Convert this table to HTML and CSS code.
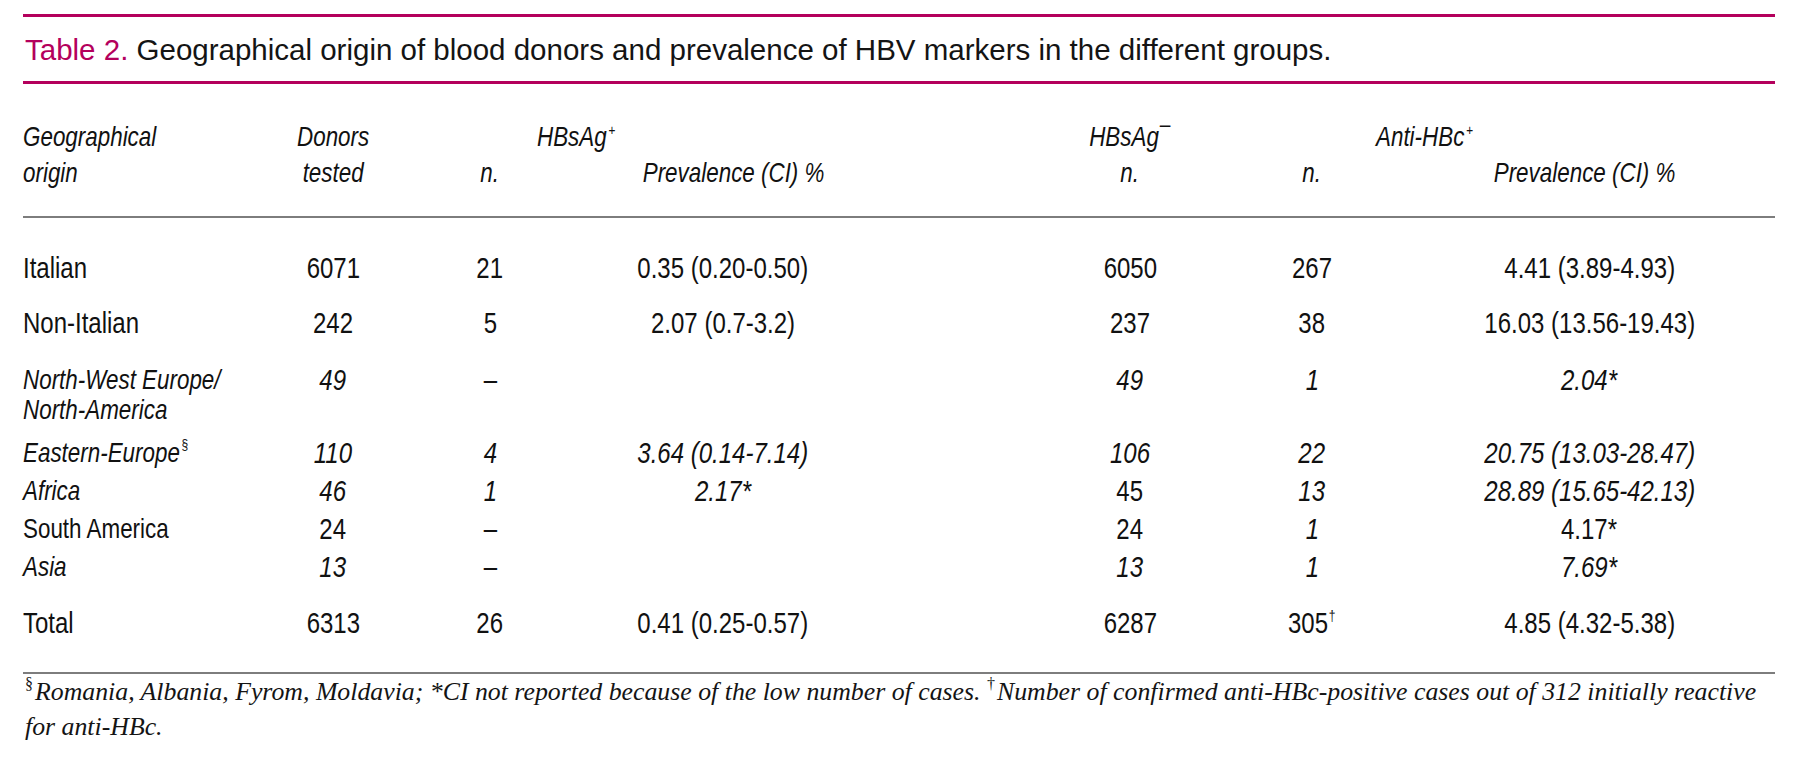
FILE: index.html
```html
<!DOCTYPE html>
<html lang="en">
<head>
<meta charset="utf-8">
<title>Table 2</title>
<link rel="stylesheet" href="styles.css">
</head>
<body>
<div class="page">
  <div class="rule-pink rule-top"></div>
  <h1 class="title"><span class="label">Table 2.</span> Geographical origin of blood donors and prevalence of HBV markers in the different groups.</h1>
  <div class="rule-pink"></div>
  <table class="data">
    <colgroup>
      <col class="w-a"><col class="w-b"><col class="w-c"><col class="w-d"><col class="w-e"><col class="w-f"><col class="w-g"><col class="w-h">
    </colgroup>
    <thead>
      <tr class="hd hd1">
        <td class="l"><span class="k">Geographical</span></td>
        <td class="c"><span class="k">Donors</span></td>
        <td class="l grp1" colspan="2"><span class="k">HBsAg<sup class="sp">+</sup></span></td>
        <td></td>
        <td class="c"><span class="k">HBsAg<sup class="sm">–</sup></span></td>
        <td class="l grp2" colspan="2"><span class="k">Anti-HBc<sup class="sp">+</sup></span></td>
      </tr>
      <tr class="hd hd2">
        <td class="l"><span class="k">origin</span></td>
        <td class="c"><span class="k">tested</span></td>
        <td class="c"><span class="k">n.</span></td>
        <td class="c prev1"><span class="k">Prevalence (CI) %</span></td>
        <td></td>
        <td class="c"><span class="k">n.</span></td>
        <td class="c"><span class="k">n.</span></td>
        <td class="c prev2"><span class="k">Prevalence (CI) %</span></td>
      </tr>
    </thead>
    <tbody>
      <tr class="r1">
        <td class="l"><span class="k">Italian</span></td>
        <td class="c"><span class="k">6071</span></td>
        <td class="c"><span class="k">21</span></td>
        <td class="c"><span class="k">0.35 (0.20-0.50)</span></td>
        <td></td>
        <td class="c"><span class="k">6050</span></td>
        <td class="c"><span class="k">267</span></td>
        <td class="c"><span class="k">4.41 (3.89-4.93)</span></td>
      </tr>
      <tr class="r2">
        <td class="l"><span class="k">Non-Italian</span></td>
        <td class="c"><span class="k">242</span></td>
        <td class="c"><span class="k">5</span></td>
        <td class="c"><span class="k">2.07 (0.7-3.2)</span></td>
        <td></td>
        <td class="c"><span class="k">237</span></td>
        <td class="c"><span class="k">38</span></td>
        <td class="c"><span class="k">16.03 (13.56-19.43)</span></td>
      </tr>
      <tr class="r3">
        <td class="sub it"><span class="k">North-West Europe/<br>North-America</span></td>
        <td class="c it"><span class="k">49</span></td>
        <td class="c"><span class="k">–</span></td>
        <td class="c"></td>
        <td></td>
        <td class="c it"><span class="k">49</span></td>
        <td class="c it"><span class="k">1</span></td>
        <td class="c it"><span class="k">2.04*</span></td>
      </tr>
      <tr class="r4">
        <td class="sub it"><span class="k">Eastern-Europe<sup class="ss">§</sup></span></td>
        <td class="c it"><span class="k">110</span></td>
        <td class="c it"><span class="k">4</span></td>
        <td class="c it"><span class="k">3.64 (0.14-7.14)</span></td>
        <td></td>
        <td class="c it"><span class="k">106</span></td>
        <td class="c it"><span class="k">22</span></td>
        <td class="c it"><span class="k">20.75 (13.03-28.47)</span></td>
      </tr>
      <tr class="r5">
        <td class="sub it"><span class="k">Africa</span></td>
        <td class="c it"><span class="k">46</span></td>
        <td class="c it"><span class="k">1</span></td>
        <td class="c it"><span class="k">2.17*</span></td>
        <td></td>
        <td class="c"><span class="k">45</span></td>
        <td class="c it"><span class="k">13</span></td>
        <td class="c it"><span class="k">28.89 (15.65-42.13)</span></td>
      </tr>
      <tr class="r6">
        <td class="sub up"><span class="k">South America</span></td>
        <td class="c"><span class="k">24</span></td>
        <td class="c"><span class="k">–</span></td>
        <td class="c"></td>
        <td></td>
        <td class="c"><span class="k">24</span></td>
        <td class="c it"><span class="k">1</span></td>
        <td class="c"><span class="k">4.17*</span></td>
      </tr>
      <tr class="r7">
        <td class="sub it"><span class="k">Asia</span></td>
        <td class="c it"><span class="k">13</span></td>
        <td class="c"><span class="k">–</span></td>
        <td class="c"></td>
        <td></td>
        <td class="c it"><span class="k">13</span></td>
        <td class="c it"><span class="k">1</span></td>
        <td class="c it"><span class="k">7.69*</span></td>
      </tr>
      <tr class="r8">
        <td class="l"><span class="k">Total</span></td>
        <td class="c"><span class="k">6313</span></td>
        <td class="c"><span class="k">26</span></td>
        <td class="c"><span class="k">0.41 (0.25-0.57)</span></td>
        <td></td>
        <td class="c"><span class="k">6287</span></td>
        <td class="c"><span class="k">305<sup class="sd">†</sup></span></td>
        <td class="c"><span class="k">4.85 (4.32-5.38)</span></td>
      </tr>
    </tbody>
  </table>
  <p class="foot"><sup class="fs">§</sup><span class="fn">Romania, Albania, Fyrom, Moldavia; *CI not reported because of the low number of cases.</span> <sup class="fs">†</sup><span class="fn">Number of confirmed anti-HBc-positive cases out of 312 initially reactive</span><br><span class="fn">for anti-HBc.</span></p>
</div>
</body>
</html>
```

FILE: styles.css
```css
html, body {
  margin: 0;
  padding: 0;
  background: #ffffff;
}

body {
  font-family: "Liberation Sans", Arial, sans-serif;
  color: #111111;
}

.page {
  width: 1752px;
  padding-left: 23px;
}

.rule-pink {
  height: 3px;
  background: #b4005c;
}

.rule-top {
  margin-top: 14px;
}

.title {
  margin: 0;
  box-sizing: border-box;
  height: 64px;
  padding: 1px 0 0 2px;
  font-size: 29.5px;
  font-weight: normal;
  line-height: 63px;
  white-space: nowrap;
  color: #141414;
}

.title .label {
  color: #b4005c;
}

.data {
  width: 1752px;
  table-layout: fixed;
  border-collapse: separate;
  border-spacing: 0;
}

.w-a { width: 247px; }
.w-b { width: 126px; }
.w-c { width: 188px; }
.w-d { width: 278px; }
.w-e { width: 178px; }
.w-f { width: 180px; }
.w-g { width: 184px; }
.w-h { width: 371px; }

.data td {
  padding: 0;
  vertical-align: top;
  white-space: nowrap;
}

.k {
  display: inline-block;
  transform: scaleX(0.8);
  white-space: nowrap;
}

.l {
  text-align: left;
  padding-left: 2px;
}

.l .k,
.sub .k {
  transform-origin: left center;
}

.c {
  text-align: center;
}

.c .k {
  transform-origin: center center;
}

.sub {
  text-align: left;
  padding-left: 27px;
}

/* header */
.hd td {
  font-style: italic;
  font-size: 28px;
  line-height: 36px;
}

.hd1 td {
  padding-top: 35px;
}

.hd2 td {
  padding-bottom: 25px;
  border-bottom: 2px solid #7d7d7d;
}

.data .grp1 {
  padding-left: 141px;
}

.data .grp2 {
  padding-left: 156px;
}

.data .prev1 {
  padding-left: 22px;
}

.data .prev2 {
  padding-right: 10px;
}

.sp {
  font-size: 15px;
  line-height: 0;
  vertical-align: 11px;
  margin-left: 2px;
}

.sm {
  font-size: 24px;
  line-height: 0;
  vertical-align: 14px;
  font-style: normal;
  margin-left: 1px;
}

/* body */
tbody td {
  font-size: 30px;
  line-height: 38px;
}

tbody .it {
  font-style: italic;
}

tbody .sub {
  font-size: 28px;
}

.ss {
  font-size: 15px;
  line-height: 0;
  vertical-align: 12px;
  font-style: normal;
  margin-left: 2px;
}

.sd {
  font-size: 15px;
  line-height: 0;
  vertical-align: 12px;
  margin-left: 1px;
}

.r1 td { padding-top: 31px; }
.r2 td { padding-top: 17px; }
.r3 td { padding-top: 23px; line-height: 30px; }
.r4 td { padding-top: 9px; }

.r8 td {
  padding-top: 18px;
  padding-bottom: 30px;
  border-bottom: 2px solid #7d7d7d;
}

/* footnote */
.foot {
  margin: 0;
  padding-left: 2px;
  font-family: "Liberation Serif", "Times New Roman", serif;
  font-style: italic;
  font-size: 25.8px;
  line-height: 35px;
  color: #141414;
  white-space: nowrap;
}

.fs {
  font-style: normal;
  font-size: 16px;
  line-height: 0;
  vertical-align: 11px;
  margin-right: 2px;
}
```
